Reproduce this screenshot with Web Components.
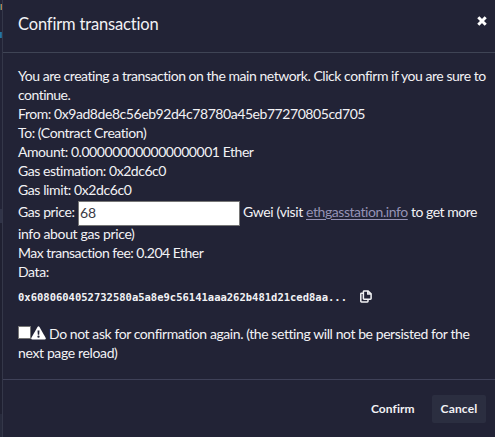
<!DOCTYPE html>
<html lang="en"><head><meta charset="utf-8"><title>Confirm transaction</title>
<style>
html,body{margin:0;height:100%;overflow:hidden;background:#222336}
body{font:14px/19px Lato,"Open Sans",sans-serif;color:#f2f2f5}
</style></head><body>
<page-backdrop><confirm-dialog>
<fit-text slot="title" w="140.5">Confirm transaction</fit-text>
<tx-details slot="body"></tx-details>
<dialog-button slot="footer"><fit-text w="43.5">Confirm</fit-text></dialog-button>
<dialog-button slot="footer" filled><fit-text w="37">Cancel</fit-text></dialog-button>
</confirm-dialog></page-backdrop>
<script>
const define=(name,html,ready)=>customElements.define(name,class extends HTMLElement{
  constructor(){super();this.attachShadow({mode:'open'}).innerHTML=html;}
  connectedCallback(){if(ready)ready(this);}
});
define('page-backdrop',`<style>
:host{display:grid;grid-template-columns:2px 1fr;height:437px;background:#222336}
.strip{display:grid;grid-template-rows:4px 6px 22px 6px 171px 14px 191px 1fr}
.a{background:linear-gradient(90deg,#286b70 50%,#b77748 50%)}
.b{background:linear-gradient(90deg,#247fae,#245b7f)}
.c{background:#303347}.d{background:#1f2031}.e{background:#272a3c}
</style><div class="strip"><i></i><i class="a"></i><i></i><i class="b"></i><i></i><i class="c"></i><i class="d"></i><i class="e"></i></div><slot></slot>`);
define('confirm-dialog',`<style>
:host{display:grid;grid-template-rows:52px 327px 1fr;box-sizing:border-box;height:437px;border-left:1px solid #343749;background:#222336}
header{display:flex;justify-content:space-between;padding:14px 8px 0 15px;font-size:16.5px;line-height:20px}
main{border-top:1px solid #3f4455;padding:13px 8px 0 15px}
footer{border-top:1px solid #3f4158;display:flex;justify-content:flex-end;gap:9px;padding:15px 9px 0 0}
svg{width:10px;height:10px;margin-top:2px}
</style><header><slot name="title"></slot><svg viewBox="0 0 10 10"><path d="M1.3 1.3 8.7 8.7M8.7 1.3 1.3 8.7" stroke="#fff" stroke-width="3"/></svg></header>
<main><slot name="body"></slot></main><footer><slot name="footer"></slot></footer>`);
define('dialog-button',`<style>
:host{display:block;box-sizing:border-box;height:28px;padding:4px 8.5px;border-radius:2px;font-size:12px;font-weight:700;line-height:20px}
:host([filled]){background:#2b2e40}</style><slot></slot>`);
define('copy-icon',`<style>:host{display:block;width:12px;height:13px}svg{display:block}</style>
<svg width="12" height="13" viewBox="0 0 12 13" fill="none" stroke="#f2f2f5" stroke-width="1.5"><path d="M4.1.9h4l3 3v4.6q0 .7-.7.7H4.1q-.7 0-.7-.7v-7q0-.6.7-.6ZM7.8 1v3.1h3.1M3.2 3.2H1.5q-.7 0-.7.7v7.4q0 .7.7.7h5.8q.7 0 .7-.7V9.6"/></svg>`);
define('warning-icon',`<style>:host{display:block;width:15px;height:14px}svg{display:block}</style>
<svg width="15" height="14" viewBox="0 0 15 14"><path d="M6.5.9q1-1.5 2 0l6.1 10.8q.8 1.7-1 1.8H1.4q-1.8-.1-1-1.8Z" fill="#fff"/><path d="M6.5 4.5h2l-.3 4.2H6.8Z" fill="#222336"/><circle cx="7.5" cy="10.7" r="1.15" fill="#222336"/></svg>`);
define('tx-details',`<style>
:host{display:block}
.l{display:flex;height:19px}
.gas{height:28px;align-items:flex-start}
.gas fit-text{margin-top:3px}
input{box-sizing:border-box;width:162px;height:25px;margin:2px 3px 0 3.5px;padding:0 2px 2px 1px;border:1px solid #767676;border-radius:0;background:#fff;color:#3b3b45;font:14px Lato,sans-serif}
.gas .link{color:#9592b5;margin:3px 3px 0;text-decoration:underline;text-underline-offset:2px}
.hex{font:700 10.5px/19px "DejaVu Sans Mono",monospace;margin:7px 0 17px;gap:13px}
.hex copy-icon{margin-top:2px}
.box{box-sizing:border-box;width:13px;height:13px;border:1px solid #767676;background:#fff;margin-top:2px}
warning-icon{margin:2px 3px 0 0}
</style>
<div class="l"><fit-text w="468">You are creating a transaction on the main network. Click confirm if you are sure to</fit-text></div>
<div class="l"><fit-text w="52.5">continue.</fit-text></div>
<div class="l"><fit-text w="347">From: 0x9ad8de8c56eb92d4c78780a45eb77270805cd705</fit-text></div>
<div class="l"><fit-text w="128.5">To: (Contract Creation)</fit-text></div>
<div class="l"><fit-text w="235.5">Amount: 0.000000000000000001 Ether</fit-text></div>
<div class="l"><fit-text w="148.5">Gas estimation: 0x2dc6c0</fit-text></div>
<div class="l"><fit-text w="113.5">Gas limit: 0x2dc6c0</fit-text></div>
<div class="l gas"><fit-text w="56.5">Gas price:</fit-text><input value="68"><fit-text w="60">Gwei (visit</fit-text><fit-text class="link" w="102">ethgasstation.info</fit-text><fit-text w="66">to get more</fit-text></div>
<div class="l" style="margin-top:-3px"><fit-text w="116.5">info about gas price)</fit-text></div>
<div class="l"><fit-text w="185.5">Max transaction fee: 0.204 Ether</fit-text></div>
<div class="l"><fit-text w="31">Data:</fit-text></div>
<div class="l hex"><fit-text w="329">0x6080604052732580a5a8e9c56141aaa262b481d21ced8aa...</fit-text><copy-icon></copy-icon></div>
<div class="l"><span class="box"></span><warning-icon></warning-icon><fit-text w="420">Do not ask for confirmation again. (the setting will not be persisted for the</fit-text></div>
<div class="l"><fit-text w="99.5">next page reload)</fit-text></div>`);
// Tracks its text so that the line takes up the width given in "w".
// Defined last: the inherited font must be settled before measuring.
define('fit-text',`<style>:host{display:inline-block;white-space:nowrap}</style><slot></slot>`,el=>{
  const w=+el.getAttribute('w'),n=el.textContent.length;
  el.style.letterSpacing='0px';
  const r=document.createRange();r.selectNodeContents(el);
  el.style.letterSpacing=((w-r.getBoundingClientRect().width)/n)+'px';
  el.style.width=w+'px';
});
</script></body></html>
